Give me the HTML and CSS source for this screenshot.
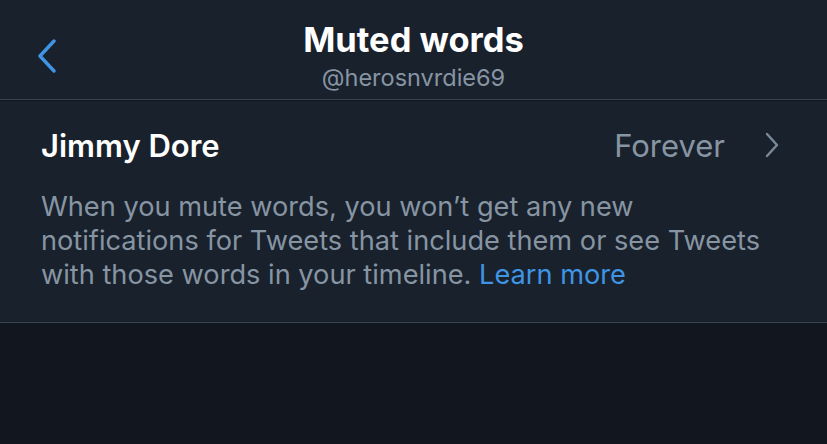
FILE: index.html
```html
<!DOCTYPE html>
<html>
<head>
<meta charset="utf-8">
<link rel="stylesheet" href="styles.css">
</head>
<body>
<div class="page">
  <header class="topbar">
    <svg class="back" viewBox="0 0 20 34" width="20" height="34"><path d="M17 2 L3 17 L17 32" fill="none" stroke="#3f95e4" stroke-width="3.4" stroke-linecap="round" stroke-linejoin="round"/></svg>
    <div class="titles">
      <div class="title">Muted words</div>
      <div class="subtitle">@herosnvrdie69</div>
    </div>
  </header>
  <section class="content">
    <div class="row">
      <span class="word">Jimmy Dore</span>
      <span class="duration">Forever</span>
      <svg class="chev" viewBox="0 0 14 26" width="14" height="26"><path d="M2 2 L12 13 L2 24" fill="none" stroke="#7b8a98" stroke-width="2.4" stroke-linecap="round" stroke-linejoin="round"/></svg>
    </div>
    <p class="desc">When you mute words, you won’t get any new notifications for Tweets that include them or see Tweets with those words in your timeline. <span class="link">Learn more</span></p>
  </section>
  <div class="rest"></div>
</div>
</body>
</html>
```
FILE: styles.css
```css
html, body { margin: 0; padding: 0; }
body {
  width: 827px;
  height: 444px;
  overflow: hidden;
  background: #12171f;
  font-family: Inter, Roboto, "Liberation Sans", sans-serif;
}
.page { display: flex; flex-direction: column; height: 444px; }
.topbar {
  position: relative;
  height: 100px;
  box-sizing: border-box;
  background: #19212d;
  border-bottom: 1px solid #3a4552;
  display: flex;
  justify-content: center;
}
.back { position: absolute; left: 37px; top: 39px; }
.titles { display: flex; flex-direction: column; align-items: center; padding-top: 23px; }
.title {
  color: #ffffff;
  font-weight: 700;
  font-size: 34.5px;
  line-height: 34px;
}
.subtitle {
  color: #8795a3;
  font-size: 23.5px;
  line-height: 24px;
  margin-top: 9px;
}
.content {
  background: #19212d;
  border-bottom: 1px solid #3a4552;
  padding: 0 41px 29px 41px;
  height: 222px;
  box-sizing: border-box;
  margin-top: 1px;
}
.row {
  height: 88px;
  display: flex;
  align-items: center;
}
.word {
  color: #ffffff;
  font-size: 31px;
  font-weight: 600;
  flex: 1;
}
.duration {
  color: #8795a3;
  font-size: 31px;
  margin-right: 40px;
}
.chev { margin-right: 7px; }
.desc {
  margin: 1px 0 0 0;
  color: #8795a3;
  font-size: 27.2px;
  line-height: 34px;
  max-width: 745px;
}
.link { color: #3f95e4; }
.rest { flex: 1; background: #12171f; }
```
